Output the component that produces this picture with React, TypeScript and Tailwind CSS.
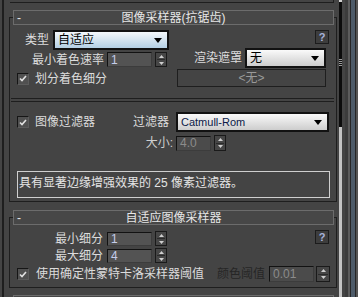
import React from "react";

function Spinner({ className }: { className: string }) {
  return (
    <div className={`flex flex-col border border-[#1a1a1a] bg-[#464646] shrink-0 ${className}`}>
      <div className="flex-1 flex items-center justify-center">
        <svg width="5" height="3" viewBox="0 0 5 3">
          <polygon points="2.5,0 5,3 0,3" fill="#cfcfcf" />
        </svg>
      </div>
      <div className="h-px mx-[1px] bg-[#2a2a2a]" />
      <div className="flex-1 flex items-center justify-center">
        <svg width="5" height="3" viewBox="0 0 5 3">
          <polygon points="0,0 5,0 2.5,3" fill="#cfcfcf" />
        </svg>
      </div>
    </div>
  );
}

function NumInput({ value, className, disabled }: { value: string; className: string; disabled?: boolean }) {
  return (
    <div
      className={`flex items-center shrink-0 border border-[#121212] border-r-[#3c3c3c] border-b-[#3c3c3c] pl-[3px] text-[12px] leading-none ${
        disabled ? "bg-[#4b4b4b] text-[#8c8c8c]" : "bg-[#535353] text-[#c6cdea]"
      } ${className}`}
    >
      {value}
    </div>
  );
}

function Checkbox({ className }: { className: string }) {
  return (
    <div
      className={`w-[12px] h-[12px] shrink-0 border border-[#161616] border-r-[#5c5c5c] border-b-[#5c5c5c] bg-[#505050] flex items-center justify-center ${className}`}
    >
      <svg width="8" height="7" viewBox="0 0 8 7">
        <path d="M1 3.5 L3 5.5 L7 1" stroke="#e2e2e2" strokeWidth="1.6" fill="none" />
      </svg>
    </div>
  );
}

function Combo({ text, className, blue, textClass }: { text: string; className: string; blue?: boolean; textClass?: string }) {
  return (
    <div
      className={`flex items-center justify-between shrink-0 border-2 border-[#121212] pl-[3px] pr-[5px] bg-linear-to-b ${
        blue ? "from-[#f4f8fb] to-[#b4d0e4]" : "from-[#fafafa] to-[#cdcdcd]"
      } ${className}`}
    >
      <span className={textClass ?? "text-[#000000]"}>{text}</span>
      <svg width="8" height="5" viewBox="0 0 8 5">
        <polygon points="0,0 8,0 4,5" fill="#000000" />
      </svg>
    </div>
  );
}

function Help({ className }: { className: string }) {
  return (
    <div
      className={`w-[14px] h-[14px] shrink-0 border border-[#1c1c1c] bg-[#3d3d3d] flex items-center justify-center text-[11px] font-bold leading-none text-[#a8b4dc] ${className}`}
    >
      ?
    </div>
  );
}

function Header({ title }: { title?: string }) {
  return (
    <div className="-mt-[8px] ml-[3px] w-[321px] h-[15px] shrink-0 border border-[#6c6c6c] bg-[#474747] grid grid-cols-[1fr_auto_1fr] items-center text-[#e6e6e6]">
      <span className="pl-[3px] leading-none">{title ? "-" : ""}</span>
      <span className="leading-none whitespace-nowrap">{title ?? ""}</span>
      <span />
    </div>
  );
}

export default function App() {
  return (
    <div className="w-[358px] h-[297px] overflow-hidden bg-[#444444] flex font-['Liberation_Sans','Noto_Sans_CJK_SC',sans-serif] text-[12px] leading-[14px] text-[#dcdcdc]">
      <div className="w-[2px] shrink-0" />
      <div className="w-[2px] shrink-0 bg-[#1e1e1e]" />
      <div className="w-[5px] shrink-0" />

      <main className="w-[328px] shrink-0 flex flex-col">
        <div className="h-[3px] ml-[1px] w-[324px] shrink-0 border-b border-r border-[#1e1e1e]" />

        {/* Rollout 1 */}
        <section className="mt-[14px] h-[185px] shrink-0 border border-[#1e1e1e] flex flex-col">
          <Header title="图像采样器(抗锯齿)" />
          <div className="h-[73px] shrink-0 flex">
            <div className="w-[166px] shrink-0 flex flex-col">
              <div className="mt-[5px] h-[20px] flex items-center">
                <span className="w-[39px] text-right">类型</span>
                <Combo className="ml-[4px] w-[116px] h-[20px]" blue text="自适应" />
              </div>
              <div className="mt-[2px] h-[15px] flex items-center">
                <span className="w-[94px] text-right whitespace-nowrap">最小着色速率</span>
                <NumInput className="ml-[3px] w-[45px] h-[15px]" value="1" />
                <Spinner className="ml-[3px] w-[12px] h-[15px]" />
              </div>
              <div className="mt-[5px] h-[13px] flex items-center">
                <Checkbox className="ml-[7px]" />
                <span className="ml-[6px] whitespace-nowrap">划分着色细分</span>
              </div>
            </div>
            <div className="w-[160px] shrink-0 flex flex-col">
              <Help className="mt-[5px] ml-[139px]" />
              <div className="mt-[4px] h-[20px] flex items-center">
                <span className="w-[66px] text-right whitespace-nowrap">渲染遮罩</span>
                <Combo className="ml-[3px] w-[81px] h-[20px]" text="无" />
              </div>
              <div className="mt-[1px] ml-[1px] w-[149px] h-[18px] border border-[#1e1e1e] flex items-center justify-center text-[#9a9a9a]">
                &lt;无&gt;
              </div>
            </div>
          </div>

          <div className="ml-[1px] w-[323px] h-[4px] shrink-0 border-t border-b border-[#1e1e1e]" />

          <div className="h-[99px] shrink-0 flex flex-col">
            <div className="mt-[10px] h-[20px] flex items-center">
              <div className="w-[159px] shrink-0 flex items-center justify-between">
                <div className="flex items-center">
                  <Checkbox className="ml-[7px]" />
                  <span className="ml-[6px] whitespace-nowrap">图像过滤器</span>
                </div>
                <span className="whitespace-nowrap">过滤器</span>
              </div>
              <Combo
                className="ml-[7px] w-[153px] h-[20px]"
                text="Catmull-Rom"
                textClass="text-[#0c1a48] text-[11px]"
              />
            </div>
            <div className="mt-[3px] h-[16px] flex items-center">
              <span className="w-[163px] text-right text-[#cfcfcf]">大小:</span>
              <NumInput className="ml-[3px] w-[35px] h-[15px]" value="4.0" disabled />
              <Spinner className="ml-[3px] w-[12px] h-[16px]" />
            </div>
            <div className="mt-[20px] ml-[7px] w-[313px] h-[27px] border border-[#cfcfcf] pt-[4px] pl-[1px] text-[#e4e4e4] whitespace-nowrap">
              具有显著边缘增强效果的 25 像素过滤器。
            </div>
          </div>
        </section>

        {/* Rollout 2 */}
        <section className="mt-[15px] h-[71px] shrink-0 border border-[#1e1e1e] flex flex-col">
          <Header title="自适应图像采样器" />
          <div className="flex shrink-0">
            <div className="w-[166px] shrink-0 flex flex-col">
              <div className="mt-[6px] h-[15px] flex items-center">
                <span className="w-[93px] text-right">最小细分</span>
                <NumInput className="ml-[4px] w-[45px] h-[14px]" value="1" />
                <Spinner className="ml-[3px] w-[12px] h-[15px]" />
              </div>
              <div className="mt-[2px] h-[15px] flex items-center">
                <span className="w-[93px] text-right">最大细分</span>
                <NumInput className="ml-[4px] w-[45px] h-[14px]" value="4" />
                <Spinner className="ml-[3px] w-[12px] h-[15px]" />
              </div>
            </div>
            <div className="w-[160px] shrink-0 flex flex-col">
              <Help className="mt-[5px] ml-[139px]" />
            </div>
          </div>
          <div className="mt-[3px] h-[16px] flex items-center">
            <div className="w-[207px] shrink-0 flex items-center">
              <Checkbox className="ml-[7px]" />
              <span className="ml-[7px] whitespace-nowrap">使用确定性蒙特卡洛采样器阈值</span>
            </div>
            <span className="text-[#262626] whitespace-nowrap">颜色阈值</span>
            <NumInput className="ml-[4px] w-[45px] h-[16px]" value="0.01" disabled />
            <Spinner className="ml-[2px] w-[14px] h-[16px]" />
          </div>
        </section>

        {/* Rollout 3 (only its header's top edge is visible) */}
        <section className="mt-[14px] h-[40px] shrink-0 border border-[#1e1e1e] flex flex-col">
          <Header />
        </section>
      </main>

      <div className="w-[2px] shrink-0" />
      <div className="w-[3px] shrink-0 flex flex-col">
        <div className="h-[2px] bg-[#d0d0d0]" />
        <div className="h-[125px] bg-[#0c0c0c] flex flex-col items-stretch">
          <div className="mt-[57px] h-px bg-[#9a9a9a]" />
          <div className="mt-[1px] h-px bg-[#9a9a9a]" />
          <div className="mt-[1px] h-px bg-[#9a9a9a]" />
          <div className="mt-[1px] h-px bg-[#9a9a9a]" />
        </div>
        <div className="flex-1 bg-[#c4c4c4]" />
      </div>
      <div className="w-[3px] shrink-0" />
      <div className="w-[3px] shrink-0 bg-[#3c3c3c]" />
      <div className="w-[2px] shrink-0 bg-[#5c5c5c]" />
      <div className="w-px shrink-0 bg-[#262626]" />
      <div className="w-[4px] shrink-0 bg-[#4d5b69]" />
      <div className="w-px shrink-0 bg-[#262626]" />
      <div className="w-[2px] shrink-0 bg-[#555555]" />
    </div>
  );
}
